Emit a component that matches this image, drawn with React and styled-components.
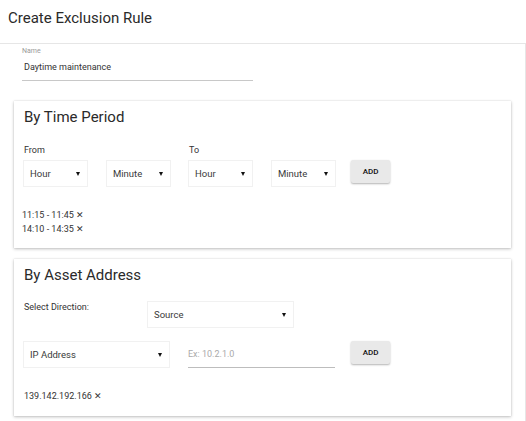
import React from 'react';
import styled, { createGlobalStyle } from 'styled-components';

const GlobalStyle = createGlobalStyle`
  body {
    margin: 0;
    font-family: Roboto, 'Liberation Sans', sans-serif;
    color: #212121;
    background: #fff;
  }
`;

function Select({ label, width }) {
  return (
    <SelectBox $width={width}>
      <span>{label}</span>
      <Arrow />
    </SelectBox>
  );
}

export default function App() {
  return (
    <>
      <GlobalStyle />
      <Header>Create Exclusion Rule</Header>
      <Content>
        <NameField>
          <FieldLabel>Name</FieldLabel>
          <FieldValue>Daytime maintenance</FieldValue>
        </NameField>

        <Card $top={20} $bottom={12}>
          <CardTitle>By Time Period</CardTitle>
          <TimeRow>
            <TimeGroup>
              <GroupLabel>From</GroupLabel>
              <Selects>
                <Select label='Hour' width={65} />
                <Select label='Minute' width={65} />
              </Selects>
            </TimeGroup>
            <TimeGroup>
              <GroupLabel>To</GroupLabel>
              <Selects>
                <Select label='Hour' width={65} />
                <Select label='Minute' width={65} />
              </Selects>
            </TimeGroup>
            <TimeAddButton>ADD</TimeAddButton>
          </TimeRow>
          <Entries>
            <Entry>11:15 - 11:45 ✕</Entry>
            <Entry>14:10 - 14:35 ✕</Entry>
          </Entries>
        </Card>

        <Card $top={11} $bottom={13}>
          <CardTitle>By Asset Address</CardTitle>
          <DirectionRow>
            <DirectionLabel>Select Direction:</DirectionLabel>
            <Select label='Source' width={147} />
          </DirectionRow>
          <AddressRow>
            <Select label='IP Address' width={147} />
            <AddressInput>Ex: 10.2.1.0</AddressInput>
            <AddButton>ADD</AddButton>
          </AddressRow>
          <Entries $left={0}>
            <Entry>139.142.192.166 ✕</Entry>
          </Entries>
        </Card>
      </Content>
    </>
  );
}

const Header = styled.div`
  height: 44px;
  box-sizing: border-box;
  padding: 9px 0 0 8px;
  font-size: 15px;
  line-height: 18px;
  color: #2a2a2a;
  border-bottom: 1px solid #e6e6e6;
`;

const Content = styled.div`
  border-right: 1px solid #e6e6e6;
  padding: 3px 14px 20px 14px;
`;

const NameField = styled.div`
  margin-left: 8px;
  width: 231px;
  border-bottom: 1px solid #c8c8c8;
  padding-bottom: 7px;
`;

const FieldLabel = styled.div`
  font-size: 7px;
  line-height: 9px;
  color: #9a9a9a;
  margin-bottom: 5px;
`;

const FieldValue = styled.div`
  font-size: 9px;
  line-height: 12px;
  padding-left: 2px;
  color: #333;
`;

const Card = styled.div`
  margin-top: ${(p) => p.$top}px;
  width: 497px;
  box-sizing: border-box;
  padding: 6px 10px ${(p) => p.$bottom}px 10px;
  background: #fff;
  box-shadow: 0 1px 3px rgba(0, 0, 0, 0.25), 0 0 1px rgba(0, 0, 0, 0.15);
`;

const CardTitle = styled.div`
  font-size: 15px;
  line-height: 20px;
  color: #2a2a2a;
`;

const TimeRow = styled.div`
  display: flex;
  align-items: flex-end;
  margin-top: 17px;
  gap: 18px;
`;

const TimeGroup = styled.div`
  display: flex;
  flex-direction: column;
`;

const GroupLabel = styled.div`
  font-size: 9px;
  line-height: 12px;
  margin-bottom: 4px;
  color: #333;
`;

const Selects = styled.div`
  display: flex;
  gap: 18px;
  margin-left: -1px;
`;

const SelectBox = styled.div`
  width: ${(p) => p.$width}px;
  height: 27px;
  box-sizing: border-box;
  border: 1px solid #f1f1f1;
  display: flex;
  align-items: center;
  justify-content: space-between;
  padding: 0 6px;
  font-size: 9.5px;
  color: #3a3a3a;
`;

const Arrow = styled.span`
  width: 0;
  height: 0;
  border-left: 2.5px solid transparent;
  border-right: 2.5px solid transparent;
  border-top: 4px solid #111;
  margin-right: 1px;
`;

const AddButton = styled.div`
  align-self: flex-start;
  margin-left: -2px;
  width: 39px;
  height: 23px;
  box-sizing: border-box;
  display: flex;
  align-items: center;
  justify-content: center;
  background: #e9e9e9;
  border-radius: 2px;
  box-shadow: 0 1px 2px rgba(0, 0, 0, 0.3);
  font-size: 8px;
  font-weight: 500;
  color: #111;
`;

const TimeAddButton = styled(AddButton)`
  align-self: flex-end;
  margin-left: -3px;
  margin-bottom: 4px;
`;

const Entries = styled.div`
  margin-top: 21px;
  margin-left: ${(p) => p.$left ?? -2}px;
`;

const Entry = styled.div`
  font-size: 9px;
  line-height: 14px;
  color: #333;
`;

const DirectionRow = styled.div`
  display: flex;
  align-items: flex-start;
  margin-top: 16px;
`;

const DirectionLabel = styled.div`
  font-size: 9px;
  line-height: 12px;
  width: 123px;
  color: #333;
`;

const AddressRow = styled.div`
  display: flex;
  align-items: flex-start;
  margin-top: 13px;
  margin-left: -1px;
  gap: 18px;
`;

const AddressInput = styled.div`
  width: 147px;
  height: 27px;
  box-sizing: border-box;
  border-bottom: 1px solid #bdbdbd;
  display: flex;
  align-items: center;
  font-size: 9px;
  color: #aaa;
`;
